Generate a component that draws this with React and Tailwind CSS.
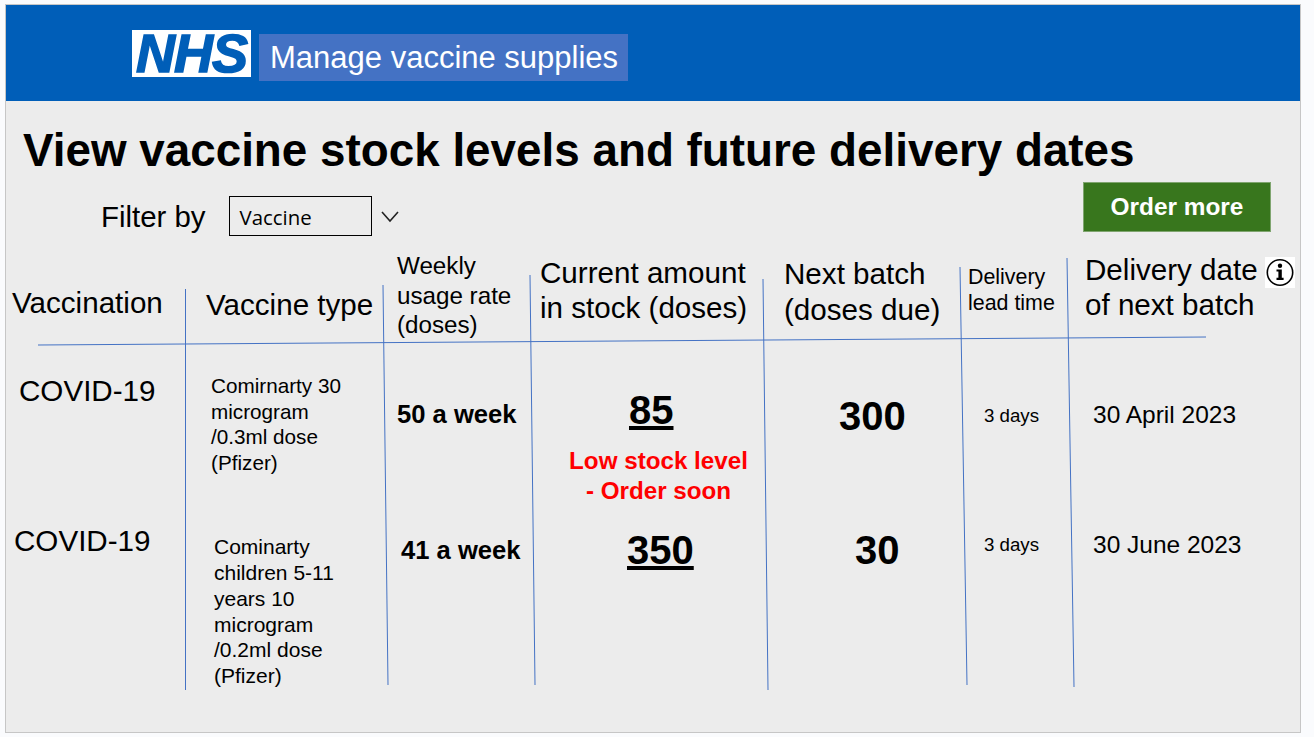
export default function App() {
  return (
    <div className="relative w-[1314px] h-[737px] overflow-hidden bg-[#fafbfd] pl-[5px] pt-[4px] text-black font-['Liberation_Sans',Arial,sans-serif]">
      <div className="w-[1296px] h-[729px] border border-[#c6c6c6] bg-[#ececec]">
        <header className="h-[96px] bg-[#005eb8] flex items-start pl-[126px] pt-[25px] gap-[8px]">
          <div className="w-[119px] h-[47px] bg-white flex items-center justify-center">
            <span className="text-[#005eb8] text-[54px] leading-[47px] font-bold italic tracking-[-1px] [-webkit-text-stroke:1.5px_#005eb8]">NHS</span>
          </div>
          <div className="mt-[4px] w-[369px] h-[47px] bg-[#4472c4] text-white text-[31px] leading-[47px] pl-[11px] whitespace-nowrap">Manage vaccine supplies</div>
        </header>

        <h1 className="mt-[25px] ml-[17px] text-[45.8px] leading-[50px] font-bold whitespace-nowrap">View vaccine stock levels and future delivery dates</h1>

        <div className="mt-[6px] h-[68px] flex items-start">
          <div className="ml-[95px] mt-[14px] flex items-start">
            <span className="text-[29.4px] leading-[42px] whitespace-nowrap">Filter by</span>
            <div className="ml-[23px] w-[143px] h-[40px] border border-black pl-[10px] text-[20.4px] leading-[40px] font-['Open_Sans',sans-serif]">Vaccine</div>
            <svg className="ml-[8px] mt-[14px]" width="20" height="13" viewBox="0 0 20 13" fill="none" stroke="#222" strokeWidth="1.6">
              <path d="M2 2 L10 11 L18 2" />
            </svg>
          </div>
          <button className="ml-auto mr-[29px] w-[188px] h-[50px] bg-[#38761d] border border-[#7fa56f] text-white text-[24.4px] font-bold">Order more</button>
        </div>

        <div className="flex items-start">
          <div className="w-[194px] shrink-0 text-[29.6px]">
            <div className="ml-[6px] mt-[34px] leading-[37px]">Vaccination</div>
            <div className="ml-[13px] mt-[51px] leading-[37px]">COVID-19</div>
            <div className="ml-[8px] mt-[113px] leading-[37px]">COVID-19</div>
          </div>

          <div className="w-[190px] shrink-0">
            <div className="ml-[6px] mt-[37px] text-[29.6px] leading-[36px] whitespace-nowrap">Vaccine type</div>
            <div className="ml-[11px] mt-[50px] text-[20.7px] leading-[25.7px] whitespace-nowrap">Comirnarty 30<br />microgram<br />/0.3ml dose<br />(Pfizer)</div>
            <div className="ml-[14px] mt-[58px] text-[21px] leading-[25.9px] whitespace-nowrap">Cominarty<br />children 5-11<br />years 10<br />microgram<br />/0.2ml dose<br />(Pfizer)</div>
          </div>

          <div className="w-[145px] shrink-0">
            <div className="ml-[7px] mt-[1px] text-[24.2px] leading-[29.5px] whitespace-nowrap">Weekly<br />usage rate<br />(doses)</div>
            <div className="ml-[7px] mt-[59px] text-[25.6px] leading-[30px] font-bold whitespace-nowrap">50 a week</div>
            <div className="ml-[11px] mt-[106px] text-[25.6px] leading-[30px] font-bold whitespace-nowrap">41 a week</div>
          </div>

          <div className="w-[240px] shrink-0">
            <div className="ml-[5px] mt-[5px] text-[29.6px] leading-[35px] whitespace-nowrap">Current amount<br />in stock (doses)</div>
            <div className="ml-[94px] mt-[61px] text-[40px] leading-[48px] font-bold underline">85</div>
            <div className="ml-[7px] mt-[12px] text-[24.2px] leading-[30px] font-bold text-[#ff0000] text-center whitespace-nowrap">Low stock level<br />- Order soon</div>
            <div className="ml-[92px] mt-[20px] text-[40px] leading-[48px] font-bold underline">350</div>
          </div>

          <div className="w-[190px] shrink-0">
            <div className="ml-[9px] mt-[6px] text-[29.6px] leading-[36px] whitespace-nowrap">Next batch<br />(doses due)</div>
            <div className="ml-[64px] mt-[64px] text-[40px] leading-[48px] font-bold">300</div>
            <div className="ml-[80px] mt-[86px] text-[40px] leading-[48px] font-bold">30</div>
          </div>

          <div className="w-[115px] shrink-0">
            <div className="ml-[3px] mt-[14px] text-[21.4px] leading-[26px] whitespace-nowrap">Delivery<br />lead time</div>
            <div className="ml-[19px] mt-[88px] text-[18.7px] leading-[24px]">3 days</div>
            <div className="ml-[19px] mt-[105px] text-[18.7px] leading-[24px]">3 days</div>
          </div>

          <div className="flex-1">
            <div className="ml-[5px] mt-[2px] text-[29.6px] leading-[35px] whitespace-nowrap">
              <div className="flex items-start h-[35px]">
                <span>Delivery date</span>
                <svg className="ml-[7px] mt-[5px] bg-white" width="30" height="31" viewBox="0 0 30 31">
                  <circle cx="15" cy="15.5" r="12.7" fill="white" stroke="black" strokeWidth="1.6" />
                  <circle cx="15" cy="8.8" r="2.2" fill="black" />
                  <path d="M11.5 12.5 H16.8 V20.8 H18.6 V23 H11.5 V20.8 H13.4 V14.6 H11.5 Z" fill="black" />
                </svg>
              </div>
              <div>of next batch</div>
            </div>
            <div className="ml-[13px] mt-[78px] text-[24.5px] leading-[30px] whitespace-nowrap">30 April 2023</div>
            <div className="ml-[13px] mt-[100px] text-[24.5px] leading-[30px] whitespace-nowrap">30 June 2023</div>
          </div>
        </div>
      </div>

      <svg className="absolute left-0 top-0 pointer-events-none" width="1314" height="737" viewBox="0 0 1314 737" fill="none" stroke="#4472c4" strokeWidth="1">
        <path d="M38 345 L1206 337" />
        <path d="M185.5 289 L185.5 690" />
        <path d="M383 285 L388 685" />
        <path d="M530 275 L535 685" />
        <path d="M763 279 L768 690" />
        <path d="M960 267 L967 685" />
        <path d="M1067 258 L1074 687" />
      </svg>
    </div>
  );
}
